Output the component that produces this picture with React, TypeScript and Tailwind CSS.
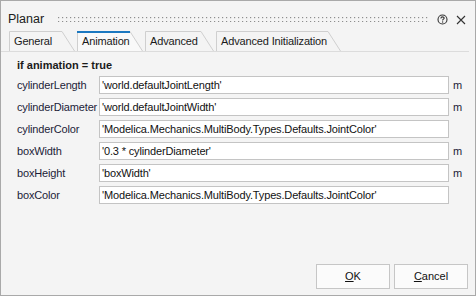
import React from "react";

const font = "font-['Liberation_Sans',Arial,sans-serif]";

type Tab = { name: string; width: number; active?: boolean };

const tabs: Tab[] = [
	{ name: "General", width: 66 },
	{ name: "Animation", width: 66, active: true },
	{ name: "Advanced", width: 69 },
	{ name: "Advanced Initialization", width: 125 },
];

type Row = { label: string; value: string; unit?: string };

const rows: Row[] = [
	{ label: "cylinderLength", value: "'world.defaultJointLength'", unit: "m" },
	{ label: "cylinderDiameter", value: "'world.defaultJointWidth'", unit: "m" },
	{ label: "cylinderColor", value: "'Modelica.Mechanics.MultiBody.Types.Defaults.JointColor'" },
	{ label: "boxWidth", value: "'0.3 * cylinderDiameter'", unit: "m" },
	{ label: "boxHeight", value: "'boxWidth'", unit: "m" },
	{ label: "boxColor", value: "'Modelica.Mechanics.MultiBody.Types.Defaults.JointColor'" },
];

function TabShape({ width, active }: { width: number; active?: boolean }) {
	const h = 20;
	return (
		<svg
			className="absolute left-0 top-0"
			width={width}
			height={h}
			viewBox={`0 0 ${width} ${h}`}
		>
			<path
				d={`M0.5 ${h} L0.5 0.5 L${width - 13} 0.5 L${width - 0.5} ${h}`}
				fill={active ? "#f9f9f9" : "#f4f4f4"}
				stroke="#cfcfcf"
				strokeWidth="1"
			/>
			{active && (
				<line x1="0" y1="1" x2={width - 13} y2="1" stroke="#1b78c0" strokeWidth="2" />
			)}
		</svg>
	);
}

function GripDots() {
	return (
		<svg className="flex-1 h-[8px] mt-[3px]" height="8">
			<defs>
				<pattern id="dots" width="4" height="4" patternUnits="userSpaceOnUse">
					<rect x="0" y="0" width="1.2" height="1.2" fill="#8e8e8e" />
				</pattern>
			</defs>
			<rect x="0" y="0" width="100%" height="5" fill="url(#dots)" />
		</svg>
	);
}

export default function App() {
	return (
		<div
			className={`${font} w-[476px] h-[296px] bg-[#f4f4f4] border border-[#a9a9a9] flex flex-col text-[#1a1a1a] overflow-hidden`}
		>
			{/* title bar */}
			<div className="flex items-center h-[30px] pl-[7px] pr-[9px] pt-[7px]">
				<span className="text-[12.5px] text-[#202020] mr-[14px]">Planar</span>
				<GripDots />
				<svg width="11" height="11" viewBox="0 0 11 11" className="ml-[7px]">
					<circle cx="5.5" cy="5.5" r="4.5" fill="none" stroke="#333" strokeWidth="1.1" />
					<path
						d="M3.9 4.4 C3.9 3.3 4.7 2.9 5.5 2.9 C6.3 2.9 7.1 3.4 7.1 4.2 C7.1 5.1 5.6 5.3 5.6 6.4"
						fill="none"
						stroke="#333"
						strokeWidth="1.1"
					/>
					<rect x="5" y="7.4" width="1.2" height="1.2" fill="#333" />
				</svg>
				<svg width="10" height="10" viewBox="0 0 10 10" className="ml-[8px]">
					<path d="M1 1 L9 9 M9 1 L1 9" stroke="#333" strokeWidth="1.1" />
				</svg>
			</div>

			{/* tabs */}
			<div className="flex items-end h-[21px] pl-[8px] border-b border-[#dcdcdc] mr-[6px]">
				{tabs.map((t) => (
					<div
						key={t.name}
						className={`relative h-[20px] mr-[2px] ${t.active ? "z-10 -mb-px h-[21px]" : ""}`}
						style={{ width: t.width }}
					>
						<TabShape width={t.width} active={t.active} />
						<span className="relative block pl-[5px] pt-[4px] text-[11px] tracking-[-0.15px] leading-[13px] text-[#1a1a1a] whitespace-nowrap">
							{t.name}
						</span>
					</div>
				))}
			</div>

			{/* content */}
			<div className="flex-1 pl-[16px] pt-[7px]">
				<div className="text-[11px] font-bold leading-[13px] h-[17px]">if animation = true</div>
				<div className="flex flex-col gap-[4px]">
					{rows.map((r) => (
						<div key={r.label} className="flex items-center h-[18px]">
							<span className="w-[82px] text-[11px] tracking-[-0.15px] text-[#1c1c38] whitespace-nowrap">
								{r.label}
							</span>
							<div className="w-[350px] h-[18px] bg-white border border-[#c4c4c4] pl-[2px] text-[11px] tracking-[-0.15px] leading-[16px] text-[#111] whitespace-nowrap overflow-hidden">
								{r.value}
							</div>
							{r.unit && <span className="ml-[4px] text-[11px] text-[#1c1c38]">{r.unit}</span>}
						</div>
					))}
				</div>
			</div>

			{/* buttons */}
			<div className="flex justify-end gap-[4px] pr-[7px] pb-[6px]">
				<button className="w-[74px] h-[25px] bg-[#fbfbfb] border border-[#c6c6c6] text-[11px] text-[#111]">
					<span className="underline">O</span>K
				</button>
				<button className="w-[74px] h-[25px] bg-[#fbfbfb] border border-[#c6c6c6] text-[11px] text-[#111]">
					<span className="underline">C</span>ancel
				</button>
			</div>
		</div>
	);
}
